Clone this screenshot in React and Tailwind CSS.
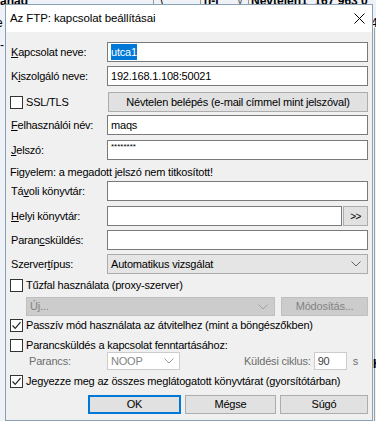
import React from "react";

const F = "font-['Liberation_Sans',Arial,sans-serif]";

function U({ children }) {
  return <span className="underline underline-offset-[1px]">{children}</span>;
}

function Label({ children }) {
  return (
    <div className="w-[97px] shrink-0 pl-[1px] text-[11px] tracking-[-0.2px] text-black leading-none">
      {children}
    </div>
  );
}

function Input({ children, className = "" }) {
  return (
    <div
      className={
        "h-[20px] border border-[#7a7a7a] bg-white flex pl-[3px] text-[11px] tracking-[-0.2px] text-black " +
        className
      }
    >
      {children}
    </div>
  );
}

function Check({ checked }) {
  return (
    <div className="w-[13px] h-[13px] border border-[#333333] bg-white shrink-0 flex items-center justify-center">
      {checked && (
        <svg width="11" height="11" viewBox="0 0 11 11">
          <path d="M1.5 5.5 L4.2 8.3 L9.5 2.2" fill="none" stroke="#222" strokeWidth="1.2" />
        </svg>
      )}
    </div>
  );
}

function Chevron({ color = "#606060" }) {
  return (
    <svg width="10" height="6" viewBox="0 0 10 6">
      <path d="M0.5 0.5 L5 5 L9.5 0.5" fill="none" stroke={color} strokeWidth="1" />
    </svg>
  );
}

export default function App() {
  return (
    <div className={"relative w-[376px] h-[421px] overflow-hidden bg-[#eef2f7] " + F}>
      {/* background application fragments */}
      <div className="absolute left-0 top-[-8px] text-[12px] font-bold text-black">ahad</div>
      <div className="absolute left-[153px] top-0 w-px h-[5px] bg-[#999]" />
      <div className="absolute left-[160px] top-[-7px] text-[12px] text-black">\</div>
      <div className="absolute left-[200px] top-0 w-px h-[5px] bg-[#999]" />
      <div className="absolute left-[204px] top-[-8px] text-[12px] font-bold text-black">[i-l</div>
      <div className="absolute left-[236px] top-[-8px] text-[11px] text-[#666]">∨</div>
      <div className="absolute left-[248px] top-0 w-px h-[5px] bg-[#999]" />
      <div className="absolute left-[251px] top-[-8px] text-[12px] font-bold text-black whitespace-nowrap">
        Névtelen1&nbsp;&nbsp;167 963 0
      </div>
      <div className="absolute left-[-4px] top-[14px] text-[12px] text-black">e</div>
      <div className="absolute left-0 top-[36px] text-[12px] text-black">-</div>
      <div className="absolute left-[371px] top-[14px] text-[12px] text-black">4</div>
      <div className="absolute left-[374px] top-[28px] w-px h-[393px] bg-[#a0a0a0]" />
      <div className="absolute left-[373px] top-[355px] text-[12px] font-bold text-black">H</div>

      {/* dialog window */}
      <div className="relative ml-[5px] mt-[4px] w-[368px] h-[417px] border border-[#8a9fb8] bg-[#f0f0f0] flex flex-col">
        {/* title bar */}
        <div className="h-[27px] bg-white flex items-center justify-between pl-[4px] pr-[3px] shrink-0">
          <span className="text-[11.5px] text-black tracking-[-0.1px]">Az FTP: kapcsolat beállításai</span>
          <svg width="11" height="11" viewBox="0 0 11 11" className="mr-[4px]">
            <path d="M0.5 0.5 L10.5 10.5 M10.5 0.5 L0.5 10.5" stroke="#000" strokeWidth="1" />
          </svg>
        </div>

        {/* body */}
        <div className="flex flex-col pl-[4px] pr-[4px]">
          <div className="mt-[10px] flex items-center">
            <Label>
              <U>K</U>apcsolat neve:
            </Label>
            <Input className="flex-1 items-center">
              <span className="bg-[#0078d7] text-white">utca1</span>
            </Input>
          </div>

          <div className="mt-[4px] flex items-center">
            <Label>
              K<U>i</U>szolgáló neve:
            </Label>
            <Input className="flex-1 items-center">192.168.1.108:50021</Input>
          </div>

          <div className="mt-[6px] flex items-center h-[20px]">
            <div className="w-[97px] shrink-0 flex items-center gap-[3px]">
              <Check />
              <span className="text-[11px] tracking-[-0.2px]">SSL/TLS</span>
            </div>
            <div className="flex-1 h-[20px] ml-[1px] border border-[#adadad] bg-[#e1e1e1] flex items-center justify-center text-[11px] tracking-[-0.2px]">
              Névtelen belépés (e-mail címmel mint jelszóval)
            </div>
          </div>

          <div className="mt-[3px] flex items-center">
            <Label>
              <U>F</U>elhasználói név:
            </Label>
            <Input className="flex-1 items-center">maqs</Input>
          </div>

          <div className="mt-[5px] flex items-center">
            <Label>
              <U>J</U>elszó:
            </Label>
            <Input className="flex-1 items-start pt-[1px]">
              <span className="text-[8px] leading-[10px] tracking-[0px]">********</span>
            </Input>
          </div>

          <div className="mt-[4px] h-[17px] flex items-center text-[11px] tracking-[-0.2px]">
            Figyelem: a megadott jelszó nem titkosított!
          </div>

          <div className="flex items-center">
            <Label>
              Tá<U>v</U>oli könyvtár:
            </Label>
            <Input className="flex-1" />
          </div>

          <div className="mt-[5px] flex items-center">
            <Label>
              <U>H</U>elyi könyvtár:
            </Label>
            <Input className="flex-1" />
            <div className="w-[25px] h-[20px] ml-[1px] border border-[#adadad] bg-[#e1e1e1] flex items-center justify-center text-[10px] tracking-[-0.5px]">
              &gt;&gt;
            </div>
          </div>

          <div className="mt-[4px] flex items-center">
            <Label>
              Paran<U>c</U>sküldés:
            </Label>
            <Input className="flex-1" />
          </div>

          <div className="mt-[4px] flex items-center">
            <Label>
              Szerver<U>t</U>ípus:
            </Label>
            <div className="flex-1 h-[20px] border border-[#acacac] bg-[#e5e5e5] flex items-center justify-between pl-[3px] pr-[6px] text-[11px] tracking-[-0.2px]">
              <span>Automatikus vizsgálat</span>
              <Chevron />
            </div>
          </div>

          <div className="mt-[4px] flex items-center gap-[3px] h-[14px]">
            <Check />
            <span className="text-[11px] tracking-[-0.2px]">Tűzfal használata (proxy-szerver)</span>
          </div>

          <div className="mt-[5px] flex items-center pl-[16px]">
            <div className="w-[249px] h-[19px] border border-[#bfbfbf] bg-[#cccccc] flex items-center justify-between pl-[3px] pr-[6px] text-[11px] tracking-[-0.2px] text-[#838383]">
              <span>Új...</span>
              <Chevron color="#a0a0a0" />
            </div>
            <div className="ml-[6px] flex-1 h-[19px] border border-[#bfbfbf] bg-[#cccccc] flex items-center justify-center text-[11px] tracking-[-0.2px] text-[#838383]">
              Módosítás...
            </div>
          </div>

          <div className="mt-[3px] flex items-center gap-[3px] h-[13px]">
            <Check checked />
            <span className="text-[11px] tracking-[-0.2px]">Passzív mód használata az átvitelhez (mint a böngészőkben)</span>
          </div>

          <div className="mt-[7px] flex items-center gap-[3px] h-[13px]">
            <Check />
            <span className="text-[11px] tracking-[-0.2px]">Parancsküldés a kapcsolat fenntartásához:</span>
          </div>

          <div className="flex items-center h-[18px] text-[11px] tracking-[-0.2px] text-[#6d6d6d]">
            <span className="w-[97px] pl-[19px] shrink-0">Parancs:</span>
            <div className="w-[73px] h-[18px] border border-[#cccccc] bg-white flex items-center justify-between pl-[3px] pr-[5px] text-[#838383]">
              <span>NOOP</span>
              <Chevron color="#a0a0a0" />
            </div>
            <span className="ml-auto mr-[3px]">Küldési ciklus:</span>
            <div className="w-[33px] h-[18px] border border-[#cccccc] bg-white flex items-center pl-[3px] text-[#404040]">
              90
            </div>
            <span className="ml-[6px] mr-[10px]">s</span>
          </div>

          <div className="mt-[5px] flex items-center gap-[3px] h-[13px]">
            <Check checked />
            <span className="text-[11px] tracking-[-0.2px]">Jegyezze meg az összes meglátogatott könyvtárat (gyorsítótárban)</span>
          </div>

          <div className="mt-[7px] flex items-center justify-end gap-[4px] text-[11px] tracking-[-0.2px]">
            <div className="w-[93px] h-[19px] border-2 border-[#0078d7] bg-[#e1e1e1] flex items-center justify-center">
              OK
            </div>
            <div className="w-[91px] h-[19px] border border-[#adadad] bg-[#e1e1e1] flex items-center justify-center">
              Mégse
            </div>
            <div className="w-[88px] h-[19px] border border-[#adadad] bg-[#e1e1e1] flex items-center justify-center">
              Súgó
            </div>
          </div>
        </div>
      </div>
    </div>
  );
}
